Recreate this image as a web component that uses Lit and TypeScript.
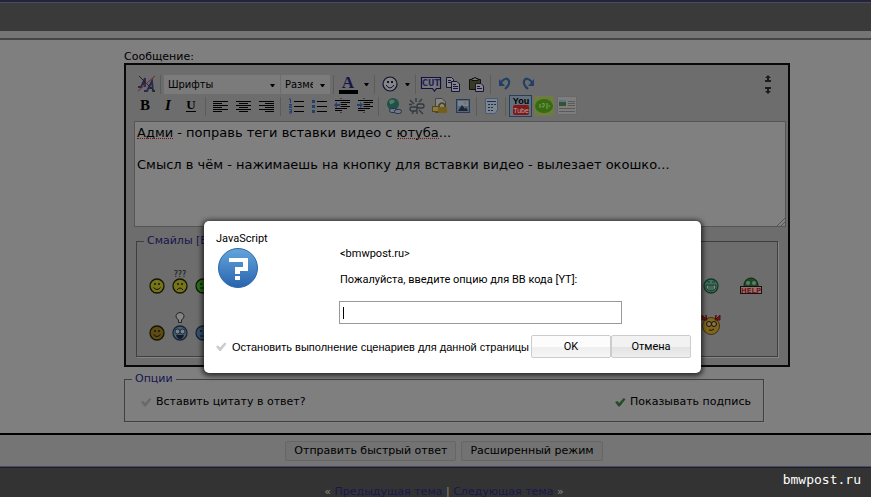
import { LitElement, html, css, svg } from "lit";
import { customElement, property } from "lit/decorators.js";

const lines = (rows: number[][]) => rows.map(([x, y, w]) => svg`<rect x=${x} y=${y} width=${w} height="1" />`);
const textLines = (align: string) =>
  lines([5, 7, 9, 11, 13, 15].map((y, i) => {
    const w = i % 2 ? 9 : 15;
    return [align === "left" ? 2 : align === "right" ? 17 - w : 2 + (15 - w) / 2, y, w];
  }));

const icons: Record<string, unknown> = {
  erase: svg`<g fill="none" stroke="#292950" stroke-width="1.8"><path d="M1 13 H4 L8 4 V13 M5 10 H8 M7 17 H10 L15 7 L16 17 H18 M11 14 H16"/></g><path d="M2 2 L18 18" stroke="#222" /><path d="M18 2 L1 17" stroke="#6e2430"/>`,
  color: svg`<text x="9" y="14" text-anchor="middle" font-family="Liberation Serif, serif" font-size="17" font-weight="bold" fill="#151548">A</text><rect x="0" y="16" width="19" height="4"/>`,
  smile: svg`<circle cx="10" cy="10" r="7" fill="#858585" stroke="#111130" stroke-width="1.2"/><path d="M6 11 Q10 17 14 11" fill="none" stroke="#111130"/><rect x="7" y="7" width="2" height="2" fill="#111130"/><rect x="11" y="7" width="2" height="2" fill="#111130"/>`,
  cut: svg`<path d="M0.5 3.5 H19.5 V14.5 H15.5 L13.5 17 L11.5 14.5 H0.5 Z" fill="#777" stroke="#111140" stroke-width="1.2"/><text x="10" y="12" text-anchor="middle" font-family="DejaVu Sans, sans-serif" font-size="8" font-weight="bold" fill="#20205c">CUT</text>`,
  copy: svg`<g fill="#858585" stroke="#15153f"><path d="M2.5 3.5 H7.5 L9.5 5.5 V13.5 H2.5 Z"/><path d="M7.5 7.5 H13 L15.5 10 V17.5 H7.5 Z"/><path d="M4 6.5 H7 M4 8.5 H7 M9 10.5 H12 M9 12.5 H14 M9 14.5 H14"/></g>`,
  paste: svg`<path d="M2.5 5.5 H13.5 V15.5 H2.5 Z" fill="#3a3a20" stroke="#111"/><path d="M5 6 V4.5 H7 L8 3 L9 4.5 H11 V6.5 H5Z" fill="#777" stroke="#111"/><path d="M8.5 9.5 H14 L16.5 12 V17.5 H8.5 Z" fill="#858585" stroke="#15153f"/><path d="M10 12.5 H13 M10 14.5 H15" stroke="#15153f"/>`,
  undo: svg`<path d="M5 8 Q11 2 13 7 Q14 11 9 15" fill="none" stroke="#223f66" stroke-width="2.2"/><path d="M3 5 V12 H9 Z" fill="#223f66"/>`,
  redo: svg`<path d="M13 8 Q7 2 5 7 Q4 11 9 15" fill="none" stroke="#223f66" stroke-width="2.2"/><path d="M15 5 V12 H9 Z" fill="#223f66"/>`,
  bold: svg`<text x="9" y="14" text-anchor="middle" font-family="Liberation Serif, serif" font-size="15" font-weight="bold">B</text>`,
  italic: svg`<text x="9" y="14" text-anchor="middle" font-family="Liberation Serif, serif" font-size="15" font-weight="bold" font-style="italic">I</text>`,
  underline: svg`<text x="9" y="13" text-anchor="middle" font-family="Liberation Serif, serif" font-size="13" font-weight="bold">U</text><rect x="4" y="15" width="10" height="1"/>`,
  left: textLines("left"),
  center: textLines("center"),
  right: textLines("right"),
  ol: svg`${lines([[8, 5, 10], [8, 10, 10], [8, 15, 10]])}<path d="M3 3 H4.500 V7 M3 8.500 H5.500 V10 H3.500 V11.500 H6 M3 13.500 H5.500 V17 H3 M3.500 15.500 H5" fill="none" stroke="#1f3d70"/>`,
  ul: svg`${lines([[8, 5, 10], [8, 10, 10], [8, 15, 10]])}<g fill="#243f6e"><rect x="3" y="4" width="3" height="3"/><rect x="3" y="9" width="3" height="3"/><rect x="3" y="14" width="3" height="3"/></g>`,
  outdent: svg`${lines([[3, 4, 15], [9, 6, 9], [9, 8, 6], [9, 10, 9], [3, 12, 12], [3, 14, 7]])}<path d="M9 2 V18" stroke="#111" stroke-dasharray="1 1"/><path d="M2 9 L5 6 V8 H8 V10 H5 V12 Z" fill="#243f6e"/>`,
  indent: svg`${lines([[3, 4, 15], [9, 6, 9], [9, 8, 6], [9, 10, 9], [3, 12, 12], [3, 14, 7]])}<path d="M9 2 V18" stroke="#111" stroke-dasharray="1 1"/><path d="M8 9 L5 6 V8 H2 V10 H5 V12 Z" fill="#243f6e"/>`,
  link: svg`<circle cx="9" cy="8" r="6" fill="#205048"/><path d="M5 5 Q8 2 11 5 Q9 9 6 8Z" fill="#4d7d60"/><g fill="#6d7787" stroke="#27354c"><rect x="5.500" y="12.500" width="7" height="4" rx="2"/><rect x="10.500" y="13.500" width="7" height="4" rx="2"/></g>`,
  unlink: svg`<g fill="none" stroke="#303840" stroke-width="1.300"><rect x="3" y="11" width="7" height="4" rx="2"/><rect x="10" y="8" width="7" height="4" rx="2"/><path d="M3 4 L7 8 M9 2 V6 M15 3 L12 6 M2 8.500 H5 M12 14 L16 18 M10 15 V18 M5 18 L7 15"/></g>`,
  lock: svg`<path d="M5.500 2.500 H12 L15.500 6 V16.500 H5.500Z" fill="#858585" stroke="#444"/><path d="M9 12 V9 Q12 5 15 9 V12" fill="none" stroke="#493f19" stroke-width="1.500"/><rect x="2.500" y="10.500" width="7" height="5" fill="#8a7b40" stroke="#544817"/><rect x="8" y="11" width="9" height="6" rx="1" fill="#735f17"/>`,
  image: svg`<rect x="3.500" y="3.500" width="13" height="13" fill="#56697c" stroke="#283a54"/><rect x="5" y="5" width="10" height="5" fill="#7a848f"/><circle cx="12" cy="7" r="1.500" fill="#8b6f50"/><path d="M5 15 L9 9 L12 13 L13 11 L15 15Z" fill="#1d2630"/>`,
  calc: svg`<path d="M3.500 2.500 H15.500 V14 L13 17.500 H3.500Z" fill="#7c8691" stroke="#4a5c72"/><path d="M5 5.500 H14 M6 8.500 H8 M9 8.500 H11 M12 8.500 H14 M6 11.500 H8 M9 11.500 H11 M6 14.500 H8 M9 14.500 H11" stroke="#1d304a"/>`,
  youtube: svg`<text x="10" y="8" text-anchor="middle" font-family="Liberation Sans, sans-serif" font-size="9" font-weight="bold">You</text><rect x="2" y="9" width="16" height="10" rx="2" fill="#841718"/><text x="10" y="17" text-anchor="middle" font-family="Liberation Sans, sans-serif" font-size="7" fill="#aaa">Tube</text>`,
  green: svg`<rect width="20" height="20" rx="3" fill="#6e7c42"/><ellipse cx="10" cy="10" rx="9" ry="7" fill="#366b10"/><path d="M6 12 V8 M8 8 Q11 6 10 10 Q9 12 8 10 M13 7 V13 M14.500 10 H16" fill="none" stroke="#729153" stroke-width="1.300"/>`,
  card: svg`<rect x="0.500" y="0.500" width="19" height="18" rx="1" fill="#7d7d7d" stroke="#686868"/><rect x="2" y="4" width="7" height="6" fill="#315433"/><rect x="2" y="4" width="7" height="2" fill="#5b758b"/><path d="M11 5.500 H18 M11 7.500 H18 M11 9.500 H18 M2 12.500 H18 M2 15.500 H18" stroke="#5a5a5a"/>`,
};

const face = (fill: string, rest: unknown, stroke = "#151500") =>
  svg`<circle cx="10" cy="20" r="7" fill=${fill} stroke=${stroke} stroke-width="1.300"/>${rest}`;
const eyes = svg`<path d="M8 17 V19 M12 17 V19" stroke="#111" stroke-width="1.400"/>`;
const smileys: Record<string, unknown> = {
  happy: face("#777519", svg`${eyes}<path d="M6.500 21.500 Q10 25.500 13.500 21.500" fill="none" stroke="#111"/>`),
  puzzled: face("#777519", svg`${eyes}<path d="M7 24 Q10 20 13 24" fill="none" stroke="#111"/><text x="10" y="11" text-anchor="middle" font-family="DejaVu Sans, sans-serif" font-size="8" fill="#111">???</text>`),
  green: face("#287018", svg`${eyes}<path d="M7 22 H13" stroke="#111"/>`),
  bronze: face("#5f4b12", svg`${eyes}<path d="M6.500 21.500 Q10 25.500 13.500 21.500" fill="none" stroke="#111"/>`),
  idea: face("#4a6073", svg`<circle cx="7.500" cy="18.500" r="2.500" fill="#7c8285" stroke="#182838"/><circle cx="12.500" cy="18.500" r="2.500" fill="#7c8285" stroke="#182838"/><path d="M6 22 H14 Q13 26 10 26 Q7 26 6 22" fill="#111c2c"/><path d="M8.500 7 Q5.500 5 6 2.500 Q7 -0.500 10 -0.500 Q13 -0.500 14 2.500 Q14.500 5 11.500 7 V9.500 H8.500Z" fill="#858585" stroke="#222"/>`, "#152535"),
  blue: face("#38506c", svg`${eyes}<path d="M7 23 H13" stroke="#111"/>`, "#152535"),
  grin: face("#40735a", svg`<path d="M6 16 H9 M11 16 H14" stroke="#12382a"/><path d="M5 19 H15 Q15 25 10 25 Q5 25 5 19Z M8 19 V24 M10 19 V25 M12 19 V24" fill="#839087" stroke="#12382a"/>`, "#12382a"),
};

@customElement("icon-button")
export class IconButton extends LitElement {
  @property() name = "";
  @property() label = "";
  @property({ type: Boolean, reflect: true }) active = false;
  static styles = css`
    :host { display: block; flex: 0 0 23px; }
    button { display: grid; place-items: center; width: 100%; height: 22px; padding: 0; border: 0; background: none; }
    :host([active]) button { border: 1px solid #253f5c; background: #62717e; }
    svg { display: block; width: 20px; height: 20px; overflow: visible; }
  `;
  render() {
    return html`<button type="button" aria-label=${this.label}><svg viewBox="0 0 20 20" aria-hidden="true">${icons[this.name]}</svg></button>`;
  }
}

const tool = (name: string, label: string, active = false) =>
  html`<icon-button .name=${name} .label=${label} ?active=${active}></icon-button>`;
const sep = html`<span class="sep"></span>`;
const arrow = html`<svg class="arrow" viewBox="0 0 5 3" aria-hidden="true"><path d="M0 0H5L3 3H2Z"/></svg>`;
const smiley = (name: string) =>
  html`<button type="button" class="smiley" aria-label=${name}><svg viewBox="0 0 20 30" aria-hidden="true">${smileys[name]}</svg></button>`;

@customElement("app-root")
export class AppRoot extends LitElement {
  static styles = css`
    * { box-sizing: border-box; }
    :host {
      display: block; position: relative; height: 100vh; overflow: hidden;
      background: #7f7f7f; color: #000; font: 11px/14px "DejaVu Sans", sans-serif;
    }
    button, input, select, textarea { font: inherit; color: inherit; }
    .top { height: 31px; background: #3b3a3a; border-top: 2px solid #23233d; box-shadow: inset 0 1px #4c4c58; }
    .strip { height: 9px; background: #757575; border-bottom: 2px solid #454545; }
    .form { height: 393px; padding: 10px 81px 0 124px; }
    .form > label { display: block; height: 13px; }
    .editor { max-width: 666px; height: 304px; padding: 8px 2px 0 8px; border: 2px solid #080808; background: #6d6d6d; }
    .row { display: flex; align-items: center; height: 22px; }
    .row.first { padding: 0 15px 0 1px; }
    .sep { flex: none; width: 1px; height: 19px; margin: 0 3px 0 2px; background: #5c5c5c; }
    .pick { position: relative; height: 19px; margin-right: 1px; background: #7b7b7b; }
    .pick select { display: block; appearance: none; width: 100%; height: 19px; padding: 0 17px 0 4px; border: 0; border-radius: 0; background: none; font: 11px/19px "DejaVu Sans Condensed", "DejaVu Sans", sans-serif; text-overflow: clip; }
    .pick .arrow { position: absolute; right: 5px; top: 9px; margin: 0; pointer-events: none; }
    .font { width: 116px; }
    .size { width: 49px; }
    .arrow { flex: none; width: 5px; height: 3px; }
    .drop { display: grid; place-items: center; width: 12px; height: 20px; padding: 0; border: 0; background: none; }
    .resize { display: grid; gap: 5px; margin-left: auto; padding: 0; border: 0; background: none; }
    .resize svg { display: block; width: 6px; height: 7px; fill: #1c1c1c; }
    .message { position: relative; height: 106px; margin-top: 4px; }
    textarea {
      display: block; width: 100%; height: 100%; margin: 0; padding: 3px 2px; resize: none; border: 1px solid #555; border-radius: 0;
      background: #808080; font-size: 13px; line-height: 16px; outline: 0;
    }
    .spell { position: absolute; top: 17px; border-bottom: 1px dotted #7b1010; }
    .s1 { left: 3px; width: 36px; }
    .s2 { left: 263px; width: 42px; }
    .grip { position: absolute; right: 1px; bottom: 1px; width: 9px; height: 9px; }
    fieldset { min-width: 0; margin: 0; padding: 0; border: 1px solid #3f3f3f; box-shadow: 1px 1px #858585; }
    legend { margin-left: 7px; padding: 0 3px; color: #15154c; line-height: 14px; }
    .smilies { height: 123px; margin: 7px 8px 0 2px; }
    .smilies .faces { margin: 0 14px 0 8px; }
    .faces { display: flex; height: 47px; }
    .smilies legend + .faces { margin-top: 18px; }
    .smiley { width: 23px; height: 30px; padding: 0; border: 0; background: none; }
    .smiley svg { display: block; width: 20px; height: 30px; margin: auto; overflow: visible; }
    .faces .push { flex: 1; }
    .help { width: 24px; height: 30px; margin-left: 17px; padding: 0; border: 0; background: none; }
    .help svg { display: block; width: 24px; height: 30px; }
    .below { width: 41px; }
    .options { max-width: 640px; height: 50px; margin-top: 5px; }
    .choices { display: flex; justify-content: space-between; padding: 9px 12px 0 15px; }
    .check { display: flex; align-items: center; gap: 4px; }
    .check input { flex: none; appearance: none; width: 12px; height: 12px; margin: 0; background: #6a6a6a; clip-path: polygon(8% 50%, 28% 42%, 42% 58%, 80% 16%, 96% 28%, 48% 88%, 36% 88%); }
    .check input:checked { background: #264c27; }
    .submit { display: flex; justify-content: center; align-items: center; gap: 5px; height: 34px; padding-left: 17px; background: #757575; border-top: 2px solid #000; border-bottom: 1px solid #4b4b63; }
    .submit button { height: 20px; padding: 0 8px; border: 1px solid #666; border-radius: 2px; background: #727272; }
    .footer { height: 31px; padding: 17px 0 0 17px; border-top: 1px solid #1c1c2e; background: #343333; text-align: center; color: #888; }
    .footer a { color: #181850; text-decoration: none; }
    .mark { position: absolute; right: 10px; bottom: 9px; color: #fff; font: 13px/16px "DejaVu Sans Mono", monospace; }
    dialog {
      position: absolute; left: 204px; top: 221px; width: 497px; height: 152px; margin: 0; padding: 11px 10px 0 11px; border: 0; border-radius: 5px;
      background: #fff; color: #000; box-shadow: 0 1px 5px 2px rgba(0, 0, 0, 0.65); font: 11px/14px Roboto, "DejaVu Sans Condensed", sans-serif;
    }
    .head { display: grid; grid-template-columns: 125px 1fr; height: 93px; }
    .title { margin: 0 0 0 1px; font: inherit; }
    .question { display: block; width: 42px; height: 42px; margin: 1px 0 0 2px; }
    .ask { padding-top: 15px; }
    .ask p { margin: 0 0 12px; }
    .ask label { display: block; margin-bottom: 14px; }
    .ask input { display: block; width: 283px; height: 23px; margin-left: -1px; padding: 2px 4px; border: 1px solid #999; outline: 0; }
    .caret { position: absolute; left: 139px; top: 86px; width: 1px; height: 12px; background: #000; }
    .actions { display: flex; align-items: center; margin-top: 10px; }
    .actions .check { flex: 1; gap: 5px; font-family: "Liberation Sans", Arial, sans-serif; white-space: nowrap; }
    .actions .check input { background: #ccc; }
    .actions button { flex: none; width: 80px; height: 23px; padding: 0; border: 1px solid #ccc; border-radius: 2px; background: linear-gradient(#fcfcfc 50%, #eee 50%, #f6f6f6); }
    .actions button.cancel { background: linear-gradient(#f2f2f2 50%, #e2e2e2 50%, #eee); }
  `;

  render() {
    return html`
      <header class="top"></header>
      <div class="strip"></div>
      <main class="form">
        <label for="message">Сообщение:</label>
        <section class="editor">
          <div class="row first">
            ${tool("erase", "Убрать форматирование")}${sep}
            <span class="pick font"><select aria-label="Шрифты"><option>Шрифты</option></select>${arrow}</span>
            <span class="pick size"><select aria-label="Размер"><option>Размер</option></select>${arrow}</span>
            ${sep}${tool("color", "Цвет")}<button type="button" class="drop" aria-label="Цвета">${arrow}</button>
            ${sep}${tool("smile", "Смайлы")}<button type="button" class="drop" aria-label="Все смайлы">${arrow}</button>
            ${sep}${tool("cut", "Вырезать")}${tool("copy", "Копировать")}${tool("paste", "Вставить")}
            ${sep}${tool("undo", "Отменить")}${tool("redo", "Повторить")}
            <button type="button" class="resize" aria-label="Размер поля">
              <svg viewBox="0 0 6 7"><path d="M3 0L6 3H0ZM0 5H6V7H0ZM2 3H4V5H2Z"/></svg>
              <svg viewBox="0 0 6 7"><path d="M3 7L6 4H0ZM0 0H6V2H0ZM2 2H4V4H2Z"/></svg>
            </button>
          </div>
          <div class="row">
            ${tool("bold", "Жирный")}${tool("italic", "Курсив")}${tool("underline", "Подчёркнутый")}${sep}
            ${tool("left", "По левому краю")}${tool("center", "По центру")}${tool("right", "По правому краю")}${sep}
            ${tool("ol", "Нумерованный список")}${tool("ul", "Список")}${tool("outdent", "Уменьшить отступ")}${tool("indent", "Увеличить отступ")}${sep}
            ${tool("link", "Ссылка")}${tool("unlink", "Убрать ссылку")}${tool("lock", "Скрытый текст")}${tool("image", "Изображение")}${sep}
            ${tool("calc", "Цитата")}${sep}
            ${tool("youtube", "YouTube", true)}${tool("green", "Видео")}${tool("card", "Карточка")}
          </div>
          <div class="message">
            <textarea id="message" spellcheck="false" .value=${"Адми - поправь теги вставки видео с ютуба...\n\nСмысл в чём - нажимаешь на кнопку для вставки видео - вылезает окошко..."}></textarea>
            <span class="spell s1"></span><span class="spell s2"></span>
            <svg class="grip" viewBox="0 0 9 9"><path d="M1 9L9 1M5 9L9 5" stroke="#555"/></svg>
          </div>
          <fieldset class="smilies">
            <legend>Смайлы [Ещ</legend>
            <div class="faces">
              ${smiley("happy")}${smiley("puzzled")}${smiley("green")}
              <span class="push"></span>${smiley("grin")}
              <button type="button" class="help" aria-label="help">
                <svg viewBox="0 0 24 30"><circle cx="12" cy="19" r="7" fill="#1e4a25" stroke="#0c2812"/><circle cx="9" cy="17" r="2" fill="#637d65"/><circle cx="15" cy="17" r="2" fill="#637d65"/><rect x="1.500" y="20.500" width="21" height="7" fill="#8b7777" stroke="#161010"/><text x="12" y="27" text-anchor="middle" font-family="DejaVu Sans, sans-serif" font-size="7" font-weight="bold" fill="#7b1515">HELP</text></svg>
              </button>
            </div>
            <div class="faces">
              ${smiley("bronze")}${smiley("idea")}${smiley("blue")}
              <span class="push"></span>
              <button type="button" class="smiley" aria-label="devil">
                <svg viewBox="0 0 20 30"><circle cx="10" cy="13" r="8.500" fill="#80651c" stroke="#413010"/><path d="M1 7 V2 L5 6 V2 L6 7Z M19 7 V2 L15 6 V2 L14 7Z" fill="#701515" stroke="#4b1010"/><circle cx="8" cy="11" r="2.500" fill="#85764e" stroke="#17120a"/><circle cx="13" cy="11" r="2.500" fill="#85764e" stroke="#17120a"/><path d="M8 17 Q11 18 13 16" fill="none" stroke="#17120a"/></svg>
              </button>
              <span class="below"></span>
            </div>
          </fieldset>
        </section>
        <fieldset class="options">
          <legend>Опции</legend>
          <div class="choices">
            <label class="check"><input type="checkbox" />Вставить цитату в ответ?</label>
            <label class="check"><input type="checkbox" checked />Показывать подпись</label>
          </div>
        </fieldset>
      </main>
      <div class="submit"><button type="button">Отправить быстрый ответ</button><button type="button">Расширенный режим</button></div>
      <footer class="footer">« <a href="#prev">Предыдущая тема</a> | <a href="#next">Следующая тема</a> »</footer>
      <span class="mark">bmwpost.ru</span>
      <dialog open aria-labelledby="title">
        <div class="head">
          <div>
            <h1 class="title" id="title">JavaScript</h1>
            <svg class="question" viewBox="0 0 42 42" aria-hidden="true">
              <defs><linearGradient id="g" x2="0" y2="1"><stop stop-color="#64a5dc"/><stop offset="1" stop-color="#2864ae"/></linearGradient></defs>
              <circle cx="21" cy="21" r="19.500" fill="url(#g)" stroke="#2c68aa"/>
              <path d="M12 11 H31 V24 H23 V27 H18 V20 H26 V15 H12Z M18 29 H23 V33 H18Z" fill="#fff"/>
            </svg>
          </div>
          <div class="ask">
            <p>&lt;bmwpost.ru&gt;</p>
            <label for="answer">Пожалуйста, введите опцию для BB кода [YT]:</label>
            <input id="answer" type="text" />
            <span class="caret"></span>
          </div>
        </div>
        <div class="actions">
          <label class="check"><input type="checkbox" />Остановить выполнение сценариев для данной страницы</label>
          <button type="button">OK</button><button type="button" class="cancel">Отмена</button>
        </div>
      </dialog>
    `;
  }
}
